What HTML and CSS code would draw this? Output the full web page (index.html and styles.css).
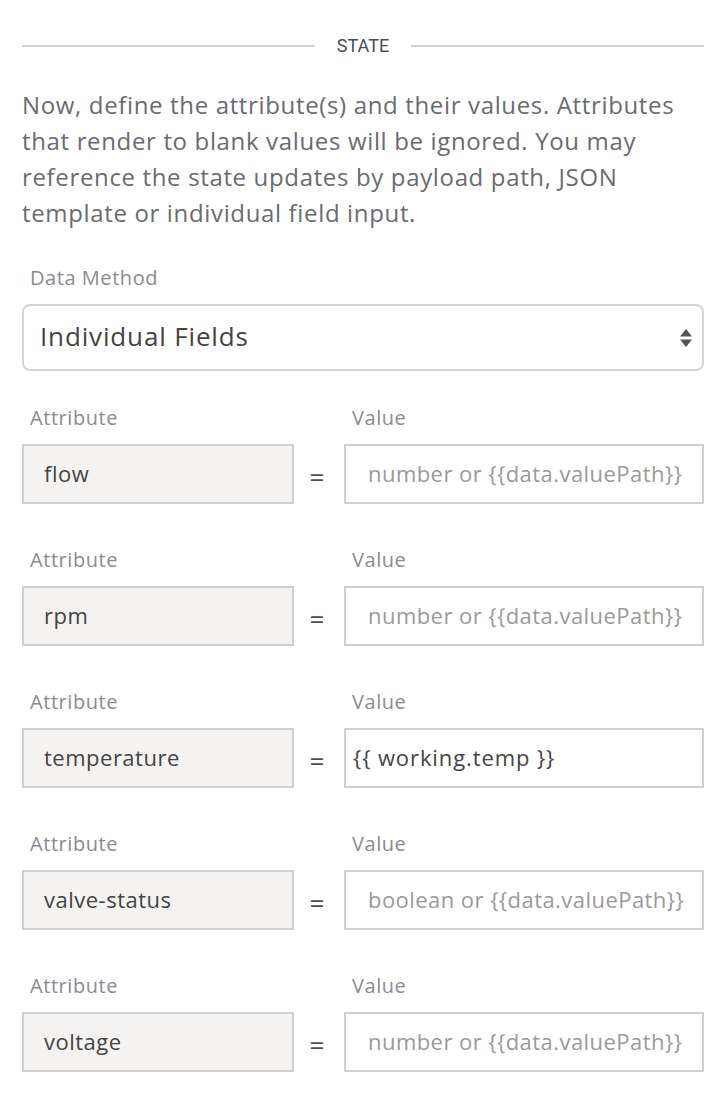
FILE: index.html
```html
<!DOCTYPE html>
<html>
<head>
<meta charset="utf-8">
<link rel="stylesheet" href="styles.css">
</head>
<body>
<div class="panel">
  <div class="divider"><span class="line"></span><span class="divider-text">STATE</span><span class="line"></span></div>
  <p class="intro">Now, define the attribute(s) and their values. Attributes that render to blank values will be ignored. You may reference the state updates by payload path, JSON template or individual field input.</p>

  <div class="field">
    <label class="label">Data Method</label>
    <div class="select">
      <span class="select-value">Individual Fields</span>
      <svg class="select-arrows" width="12" height="18" viewBox="0 0 12 18"><path d="M6 0 L12 7.5 H0 Z" fill="#555"/><path d="M0 10.5 H12 L6 18 Z" fill="#555"/></svg>
    </div>
  </div>

  <div class="row">
    <label class="label">Attribute</label><span></span><label class="label">Value</label>
    <div class="input attr">flow</div><div class="eq">=</div><div class="input value placeholder">number or {{data.valuePath}}</div>
  </div>
  <div class="row">
    <label class="label">Attribute</label><span></span><label class="label">Value</label>
    <div class="input attr">rpm</div><div class="eq">=</div><div class="input value placeholder">number or {{data.valuePath}}</div>
  </div>
  <div class="row">
    <label class="label">Attribute</label><span></span><label class="label">Value</label>
    <div class="input attr">temperature</div><div class="eq">=</div><div class="input value filled">{{ working.temp }}</div>
  </div>
  <div class="row">
    <label class="label">Attribute</label><span></span><label class="label">Value</label>
    <div class="input attr">valve-status</div><div class="eq">=</div><div class="input value placeholder">boolean or {{data.valuePath}}</div>
  </div>
  <div class="row">
    <label class="label">Attribute</label><span></span><label class="label">Value</label>
    <div class="input attr">voltage</div><div class="eq">=</div><div class="input value placeholder">number or {{data.valuePath}}</div>
  </div>
</div>
</body>
</html>
```
FILE: styles.css
```css
html, body {
  margin: 0;
  padding: 0;
  background: #ffffff;
}
body {
  font-family: "Open Sans", Roboto, sans-serif;
}
.panel {
  padding: 32px 24px 0 22px;
}
.divider {
  display: flex;
  align-items: center;
  gap: 22px;
  height: 28px;
}
.line {
  flex: 1;
  height: 2px;
  background: #d2d2d2;
}
.divider-text {
  font-family: Roboto, sans-serif;
  font-size: 18px;
  color: #4a4c5c;
  line-height: 28px;
}
.intro {
  margin: 27px 0 33px;
  font-size: 24px;
  letter-spacing: 0.65px;
  line-height: 36px;
  color: #6a6b70;
}
.label {
  display: block;
  padding-left: 8px;
  font-size: 20px;
  letter-spacing: 0.55px;
  line-height: 28px;
  color: #8a8b92;
}
.field .label {
  margin-bottom: 12px;
}
.select {
  box-sizing: border-box;
  height: 67px;
  border: 2px solid #d4d4d4;
  border-radius: 8px;
  display: flex;
  align-items: center;
  justify-content: space-between;
  padding: 0 10px 0 16px;
  margin-bottom: 33px;
}
.select-value {
  font-size: 26px;
  letter-spacing: 0.85px;
  color: #444;
  padding-bottom: 4px;
}
.row {
  display: grid;
  grid-template-columns: 272px 50px 1fr;
  row-gap: 12px;
  margin-bottom: 42px;
}
.input {
  box-sizing: border-box;
  height: 60px;
  border: 2px solid #cfcfcf;
  display: flex;
  align-items: center;
  padding-bottom: 3px;
  font-size: 22px;
  letter-spacing: 0.5px;
  color: #444;
  white-space: nowrap;
  overflow: hidden;
}
.attr {
  background: #f4f3f2;
  padding-left: 20px;
}
.value {
  background: #fff;
}
.placeholder {
  color: #9a9a9a;
  padding-left: 22px;
  letter-spacing: 0.45px;
}
.filled {
  padding-left: 7px;
  letter-spacing: 0.9px;
}
.eq {
  display: flex;
  align-items: center;
  justify-content: center;
  padding-top: 6px;
  padding-right: 4px;
  font-size: 26px;
  color: #4a4c5c;
}
```
